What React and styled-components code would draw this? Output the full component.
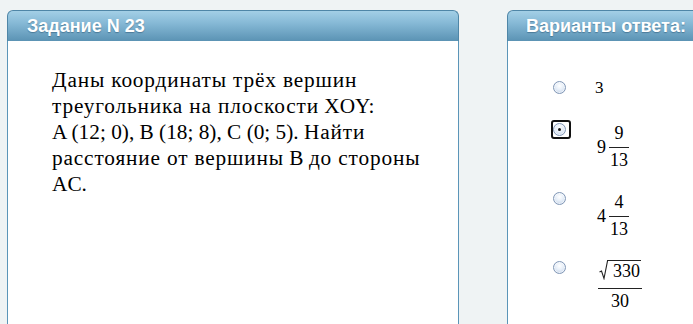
import React from "react";
import styled, { createGlobalStyle } from "styled-components";

const Global = createGlobalStyle`
  html, body { margin: 0; padding: 0; }
  body {
    background: #eff3f4;
    width: 693px;
    height: 324px;
    overflow: hidden;
  }
`;

const Page = styled.div`
  display: flex;
  gap: 48px;
  padding: 10px 0 0 7px;
  width: 1000px;
`;

const Panel = styled.section`
  display: flex;
  flex-direction: column;
  width: ${(p) => p.$w}px;
  flex: none;
`;

const Header = styled.div`
  height: 31px;
  box-sizing: border-box;
  border: 1px solid #4f86a7;
  border-bottom: none;
  border-radius: 6px 6px 0 0;
  background: linear-gradient(to bottom, #a3cfe6 0%, #86b9d6 40%, #5b93b4 100%);
  padding: 0 0 0 ${(p) => p.$pad}px;
  display: flex;
  align-items: center;
  font-family: "Liberation Sans", Arial, sans-serif;
  font-weight: bold;
  font-size: 18px;
  color: #ffffff;
  text-shadow: 0 1px 1px rgba(30, 70, 100, 0.45);
  white-space: nowrap;
`;

const Body = styled.div`
  background: #ffffff;
  border-left: 1px solid #5b95b8;
  border-right: 1px solid #5b95b8;
  height: 300px;
  box-sizing: border-box;
`;

const Question = styled.div`
  display: flex;
  flex-direction: column;
  padding: 26px 18px 0 44px;
  font-family: "Liberation Serif", "Times New Roman", serif;
  font-size: 21.3px;
  line-height: 26px;
  color: #000;
`;

const Line = styled.span`
  display: block;
  white-space: nowrap;
`;

const Ru = styled.span`
  letter-spacing: 0.85px;
`;

const Answers = styled.div`
  display: flex;
  flex-direction: column;
  padding: 38px 0 0 45px;
`;

const Row = styled.label`
  display: flex;
  align-items: flex-start;
  margin-bottom: ${(p) => p.$mb}px;
`;

const RadioCell = styled.span`
  position: relative;
  width: 42px;
  flex: none;
  padding-top: 2px;
  display: flex;
`;

const Radio = styled.span`
  position: relative;
  width: 13px;
  height: 13px;
  box-sizing: border-box;
  border-radius: 50%;
  border: 1px solid #8197b6;
  background: radial-gradient(circle at 50% 35%, #ffffff 0%, #e6eef8 45%, #b9cbe3 100%);
  box-shadow: inset 0 0 0 1px rgba(255, 255, 255, 0.6);
  &::after {
    content: "";
    display: ${(p) => (p.$checked ? "block" : "none")};
    position: absolute;
    left: 50%;
    top: 50%;
    width: 3px;
    height: 3px;
    margin: -1.5px 0 0 -1.5px;
    border-radius: 50%;
    background: #111;
  }
`;

const Focus = styled.span`
  position: absolute;
  left: -2px;
  top: -1px;
  width: 20px;
  height: 19px;
  box-sizing: border-box;
  border: 2px solid #111;
  border-radius: 3px;
`;

const Answer = styled.span`
  display: inline-flex;
  align-items: center;
  gap: 3px;
  margin-top: ${(p) => p.$mt}px;
  padding-left: ${(p) => p.$pl || 0}px;
  font-family: "Liberation Serif", "Times New Roman", serif;
  font-size: ${(p) => p.$fs}px;
  line-height: 18px;
  color: #000;
`;

const Frac = styled.span`
  display: inline-flex;
  flex-direction: column;
  align-items: center;
`;

const Num = styled.span`
  padding: 0 1px 5px;
  line-height: 18px;
`;

const Bar = styled.span`
  align-self: stretch;
  height: 1px;
  background: #222;
`;

const Den = styled.span`
  padding: 3px 1px 0;
  line-height: 18px;
`;

const Sqrt = styled.span`
  display: inline-flex;
  align-items: flex-end;
`;

const RootSign = styled.svg`
  width: 9px;
  height: 20px;
  flex: none;
`;

const Radicand = styled.span`
  border-top: 1px solid #222;
  padding: 1px 1px 0 6px;
  margin-left: -1px;
  line-height: 18px;
`;

function RadioBox({ checked, focused }) {
  return (
    <RadioCell>
      <Radio $checked={checked} />
      {focused && <Focus />}
    </RadioCell>
  );
}

export default function App() {
  return (
    <>
      <Global />
      <Page>
        <Panel $w={452}>
          <Header $pad={19}>Задание N 23</Header>
          <Body>
            <Question>
              <Line>
                <Ru>Даны координаты трёх вершин</Ru>
              </Line>
              <Line>
                <Ru>треугольника на плоскости</Ru> XOY:
              </Line>
              <Line>
                A (12; 0), B (18; 8), C (0; 5). <Ru>Найти</Ru>
              </Line>
              <Line>
                <Ru>расстояние от вершины</Ru> B <Ru>до стороны</Ru>
              </Line>
              <Line>AC.</Line>
            </Question>
          </Body>
        </Panel>
        <Panel $w={300}>
          <Header $pad={18}>Варианты ответа:</Header>
          <Body>
            <Answers>
              <Row $mb={24}>
                <RadioBox />
                <Answer $mt={0} $fs={17}>3</Answer>
              </Row>
              <Row $mb={21}>
                <RadioBox checked focused />
                <Answer $mt={3} $fs={18} $pl={2}>
                  9
                  <Frac>
                    <Num>9</Num>
                    <Bar />
                    <Den>13</Den>
                  </Frac>
                </Answer>
              </Row>
              <Row $mb={21}>
                <RadioBox />
                <Answer $mt={3} $fs={18} $pl={2}>
                  4
                  <Frac>
                    <Num>4</Num>
                    <Bar />
                    <Den>13</Den>
                  </Frac>
                </Answer>
              </Row>
              <Row $mb={0}>
                <RadioBox />
                <Answer $mt={1} $fs={18} $pl={3}>
                  <Frac>
                    <Num>
                      <Sqrt>
                        <RootSign viewBox="0 0 9 20">
                          <path
                            d="M0.5 12 L2.5 11 L5 18.5 L8.6 0.5 L9 0.5"
                            fill="none"
                            stroke="#222"
                            strokeWidth="1.1"
                          />
                        </RootSign>
                        <Radicand>330</Radicand>
                      </Sqrt>
                    </Num>
                    <Bar />
                    <Den>30</Den>
                  </Frac>
                </Answer>
              </Row>
            </Answers>
          </Body>
        </Panel>
      </Page>
    </>
  );
}
